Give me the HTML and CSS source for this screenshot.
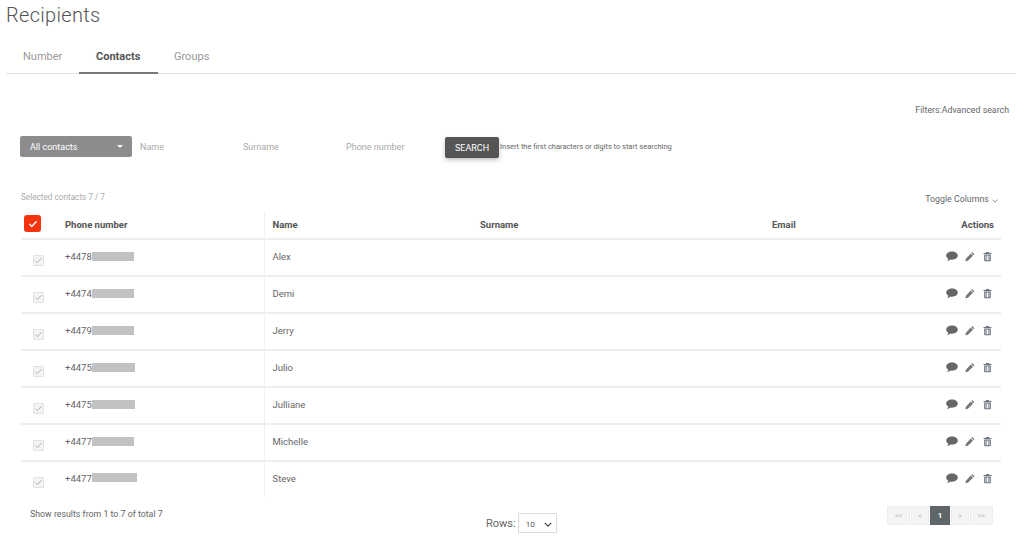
FILE: index.html
```html
<!DOCTYPE html>
<html lang="en">
<head>
<meta charset="utf-8">
<title>Recipients</title>
<link rel="stylesheet" href="styles.css">
</head>
<body>
<svg class="defs" width="0" height="0" aria-hidden="true">
  <symbol id="i-chat" viewBox="0 0 12 11"><path d="M6 .5C2.700.5.200 2.300.200 4.600c0 1.300.800 2.500 2.100 3.200-.100.900-.600 1.700-1.200 2.300 1.300-.100 2.500-.700 3.300-1.500.500.100 1 .200 1.600.200 3.300 0 5.800-1.900 5.800-4.200S9.300.5 6 .5z"/></symbol>
  <symbol id="i-pen" viewBox="0 0 11 11"><path d="M8 .6 10.400 3l-1 1L7 1.600zM6.400 2.200 8.800 4.600 3.200 10.200.4 10.800 1 8z"/></symbol>
  <symbol id="i-bin" viewBox="0 0 10 11"><path fill-rule="evenodd" d="M3.500.5h3l.5 1.100h2.400v1.100H.6V1.600H3zM1.300 3.300h7.400v6.600c0 .5-.4.9-.9.9H2.200c-.5 0-.9-.4-.9-.9zm1.500 1v5.300h1V4.300zm1.700 0v5.300h1V4.300zm1.700 0v5.300h1V4.300z"/></symbol>
</svg>
<main class="page">
  <h1 class="title">Recipients</h1>
  <nav class="tabs">
    <a class="tab">Number</a>
    <a class="tab tab-active">Contacts</a>
    <a class="tab">Groups</a>
  </nav>
  <div class="filters-link">Filters:Advanced search</div>
  <form class="search">
    <div class="dropdown"><span>All contacts</span><i class="caret"></i></div>
    <span class="field field-name">Name</span>
    <span class="field field-surname">Surname</span>
    <span class="field field-phone">Phone number</span>
    <button class="search-btn" type="button">SEARCH</button>
    <span class="hint">Insert the first characters or digits to start searching</span>
  </form>
  <div class="table-top">
    <span class="selected">Selected contacts 7 / 7</span>
    <span class="toggle">Toggle Columns <svg class="chev" viewBox="0 0 8 5" width="6" height="4"><path d="M.8.8 4 4 7.200.8" fill="none" stroke="#666" stroke-width="1"/></svg></span>
  </div>
  <table class="grid">
    <colgroup><col class="c-check"><col class="c-phone"><col class="c-name"><col class="c-surname"><col class="c-email"><col class="c-actions"></colgroup>
    <thead>
      <tr>
        <th class="cell-check"><span class="master"><svg viewBox="0 0 12 10" width="10" height="8"><path d="M1.500 5 4.500 8 10.500 1.500" fill="none" stroke="#fff" stroke-width="1.800"/></svg></span></th>
        <th class="cell-phone">Phone number</th><th class="cell-name">Name</th><th>Surname</th><th>Email</th><th class="cell-actions">Actions</th>
      </tr>
    </thead>
    <tbody>
      <tr><td class="cell-check"><span class="box"><svg viewBox="0 0 12 10" width="9" height="7"><path d="M1.500 5 4.500 8 10.500 1.500" fill="none" stroke="#aaa" stroke-width="1.300"/></svg></span></td><td class="cell-phone"><span class="num">+4478<i class="mask" style="width:42px"></i></span></td><td class="cell-name">Alex</td><td></td><td></td><td class="cell-actions"><svg class="ic chat"><use href="#i-chat"/></svg><svg class="ic pen"><use href="#i-pen"/></svg><svg class="ic bin"><use href="#i-bin"/></svg></td></tr>
      <tr><td class="cell-check"><span class="box"><svg viewBox="0 0 12 10" width="9" height="7"><path d="M1.500 5 4.500 8 10.500 1.500" fill="none" stroke="#aaa" stroke-width="1.300"/></svg></span></td><td class="cell-phone"><span class="num">+4474<i class="mask" style="width:42px"></i></span></td><td class="cell-name">Demi</td><td></td><td></td><td class="cell-actions"><svg class="ic chat"><use href="#i-chat"/></svg><svg class="ic pen"><use href="#i-pen"/></svg><svg class="ic bin"><use href="#i-bin"/></svg></td></tr>
      <tr><td class="cell-check"><span class="box"><svg viewBox="0 0 12 10" width="9" height="7"><path d="M1.500 5 4.500 8 10.500 1.500" fill="none" stroke="#aaa" stroke-width="1.300"/></svg></span></td><td class="cell-phone"><span class="num">+4479<i class="mask" style="width:42px"></i></span></td><td class="cell-name">Jerry</td><td></td><td></td><td class="cell-actions"><svg class="ic chat"><use href="#i-chat"/></svg><svg class="ic pen"><use href="#i-pen"/></svg><svg class="ic bin"><use href="#i-bin"/></svg></td></tr>
      <tr><td class="cell-check"><span class="box"><svg viewBox="0 0 12 10" width="9" height="7"><path d="M1.500 5 4.500 8 10.500 1.500" fill="none" stroke="#aaa" stroke-width="1.300"/></svg></span></td><td class="cell-phone"><span class="num">+4475<i class="mask" style="width:43px"></i></span></td><td class="cell-name">Julio</td><td></td><td></td><td class="cell-actions"><svg class="ic chat"><use href="#i-chat"/></svg><svg class="ic pen"><use href="#i-pen"/></svg><svg class="ic bin"><use href="#i-bin"/></svg></td></tr>
      <tr><td class="cell-check"><span class="box"><svg viewBox="0 0 12 10" width="9" height="7"><path d="M1.500 5 4.500 8 10.500 1.500" fill="none" stroke="#aaa" stroke-width="1.300"/></svg></span></td><td class="cell-phone"><span class="num">+4475<i class="mask" style="width:43px"></i></span></td><td class="cell-name">Julliane</td><td></td><td></td><td class="cell-actions"><svg class="ic chat"><use href="#i-chat"/></svg><svg class="ic pen"><use href="#i-pen"/></svg><svg class="ic bin"><use href="#i-bin"/></svg></td></tr>
      <tr><td class="cell-check"><span class="box"><svg viewBox="0 0 12 10" width="9" height="7"><path d="M1.500 5 4.500 8 10.500 1.500" fill="none" stroke="#aaa" stroke-width="1.300"/></svg></span></td><td class="cell-phone"><span class="num">+4477<i class="mask" style="width:42px"></i></span></td><td class="cell-name">Michelle</td><td></td><td></td><td class="cell-actions"><svg class="ic chat"><use href="#i-chat"/></svg><svg class="ic pen"><use href="#i-pen"/></svg><svg class="ic bin"><use href="#i-bin"/></svg></td></tr>
      <tr><td class="cell-check"><span class="box"><svg viewBox="0 0 12 10" width="9" height="7"><path d="M1.500 5 4.500 8 10.500 1.500" fill="none" stroke="#aaa" stroke-width="1.300"/></svg></span></td><td class="cell-phone"><span class="num">+4477<i class="mask" style="width:45px"></i></span></td><td class="cell-name">Steve</td><td></td><td></td><td class="cell-actions"><svg class="ic chat"><use href="#i-chat"/></svg><svg class="ic pen"><use href="#i-pen"/></svg><svg class="ic bin"><use href="#i-bin"/></svg></td></tr>
    </tbody>
  </table>
  <footer class="foot">
    <span class="results">Show results from 1 to 7 of total 7</span>
    <div class="rows"><span class="rows-label">Rows:</span><span class="rows-select"><span>10</span><svg viewBox="0 0 10 6" width="8" height="5"><path d="M1 1 5 5 9 1" fill="none" stroke="#444" stroke-width="1.600"/></svg></span></div>
    <div class="pager"><span class="pg pg-wide">&lt;&lt;</span><span class="pg">&lt;</span><span class="pg pg-on">1</span><span class="pg">&gt;</span><span class="pg pg-wide">&gt;&gt;</span></div>
  </footer>
</main>
</body>
</html>
```

FILE: styles.css
```css
* { box-sizing: border-box; }
html, body { margin: 0; padding: 0; background: #fff; }
body { font-family: Roboto, "Liberation Sans", sans-serif; color: #666; height: 549px; overflow: hidden; }
.defs { position: absolute; }
.page { width: 1024px; display: flex; flex-direction: column; padding: 0 0 0 6px; }
.title { margin: 3px 0 0; font-size: 20px; line-height: 24px; font-weight: 300; color: #555; letter-spacing: .3px; height: 24px; }
.tabs { display: flex; width: 1010px; height: 47px; margin-top: 0; border-bottom: 1px solid #e4e4e4; padding-top: 22px; }
.tab { font-size: 11px; line-height: 16px; color: #999; padding: 0 17px; height: 25px; margin-bottom: -1px; }
.tab:first-child { width: 73px; }
.tab-active { width: 79px; font-weight: 700; color: #555; border-bottom: 1px solid #777; box-shadow: inset 0 -1px 0 #777; padding-right: 0; }
.tab:last-child { padding-left: 16px; }
.filters-link { align-self: flex-end; margin: 30px 15px 0 0; font-size: 8.800px; line-height: 12px; color: #666; }
.search { display: flex; align-items: flex-start; height: 24px; margin: 20px 0 0 14px; }
.dropdown { width: 112px; height: 21px; background: #8c8c8c; border-radius: 2px; color: #fff; font-size: 9px; line-height: 20px; padding: 0 10px; display: flex; justify-content: space-between; align-items: center; }
.caret { width: 0; height: 0; border: 3px solid transparent; border-top-color: #fff; border-bottom: 0; margin-right: -1px; }
.field { font-size: 9px; line-height: 12px; color: #aaa; margin-top: 5px; }
.field-name { margin-left: 8px; width: 103px; }
.field-surname { width: 103px; }
.field-phone { width: 99px; }
.search-btn { width: 54px; height: 21px; margin: 1px 0 0; padding: 1px 0 0; border: 0; border-radius: 2px; background: #555; color: #fff; font: 400 9px Roboto, sans-serif; box-shadow: 0 2px 4px rgba(0,0,0,.25); }
.hint { font-size: 7.450px; line-height: 12px; color: #666; margin: 5px 0 0 1px; white-space: nowrap; }
.table-top { display: flex; justify-content: space-between; align-items: flex-start; margin: 31px 26px 0 15px; height: 20px; }
.selected { font-size: 8.200px; line-height: 12px; color: #aaa; }
.toggle { font-size: 8.800px; line-height: 12px; color: #666; margin-top: 2px; }
.chev { margin-left: 1px; vertical-align: -1px; }
.grid { border-collapse: collapse; table-layout: fixed; width: 980px; margin: 0 0 0 15px; font-size: 9.500px; }
.c-check { width: 36px; } .c-phone { width: 207px; } .c-name { width: 208px; } .c-surname { width: 292px; } .c-email { width: 130px; } .c-actions { width: 107px; }
th { height: 28px; text-align: left; font-weight: 700; font-size: 9.500px; color: #555; padding: 0 8px; border-bottom: 2px solid #eee; }
td { height: 37px; padding: 0 8px 2px; color: #666; border-bottom: 2px solid #eee; font-size: 9.500px; }
tbody tr:last-child td { border-bottom: 0; height: 36px; padding-bottom: 3px; }
.cell-check, tbody tr:last-child td.cell-check { padding: 0; text-align: center; }
.cell-phone { border-right: 1px solid #f0f0f0; }
.cell-actions { text-align: right; padding-right: 9px; white-space: nowrap; line-height: 11px; }
th.cell-actions { padding-right: 7px; }
.master { display: inline-flex; align-items: center; justify-content: center; width: 17px; height: 17px; border-radius: 3px; background: #f4340f; vertical-align: 4px; margin-right: 13px; }
.box { display: inline-flex; align-items: center; justify-content: center; width: 11px; height: 11px; border: 1px solid #e2e2e2; background: #f4f4f4; border-radius: 1px; margin-right: 2px; position: relative; top: 3px; }
.num { display: inline-flex; align-items: center; }
.mask { display: inline-block; height: 9px; background: #c2c2c2; margin-top: -1px; }
.ic { vertical-align: top; height: 11px; }
.chat { width: 12px; fill: #666; margin-right: 7px; }
.pen { width: 10px; fill: #777; margin-right: 8px; }
.bin { width: 9px; fill: #6c7480; }
.foot { display: flex; width: 996px; margin-left: 15px; height: 40px; align-items: flex-start; }
.results { font-size: 8.800px; line-height: 12px; margin: 11px 0 0 9px; width: 456px; color: #666; }
.rows { display: flex; align-items: center; margin-top: 16px; width: 401px; }
.rows-label { font-size: 11px; color: #666; margin-right: 2px; }
.rows-select { display: flex; justify-content: space-between; align-items: center; width: 39px; height: 20px; border: 1px solid #ddd; padding: 2px 4px 0 7px; font-size: 8px; color: #555; }
.pager { display: flex; gap: 1px; margin-top: 9px; }
.pg { display: flex; align-items: center; justify-content: center; width: 18px; height: 19px; background: #f4f4f4; border: 1px solid #eee; font-size: 7px; color: #bbb; }
.pg-wide { width: 23px; }
.pg-on { background: #5f6669; border-color: #5f6669; color: #fff; font-weight: 700; font-size: 8px; width: 20px; }
```
